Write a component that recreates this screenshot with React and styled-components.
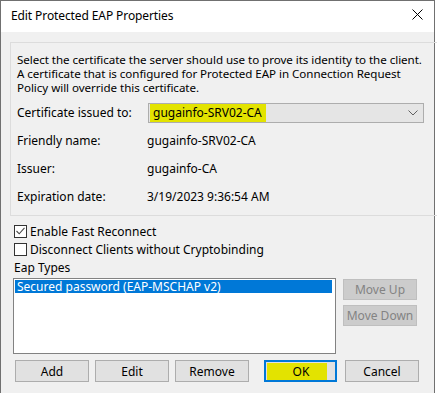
import React from 'react';
import styled, { createGlobalStyle } from 'styled-components';

const GlobalStyle = createGlobalStyle`
  html, body {
    margin: 0;
    padding: 0;
    background: #ffffff;
  }
  body {
    font-family: "Noto Sans", "Open Sans", sans-serif;
    font-size: 12px;
    color: #000;
  }
`;

const Page = styled.div`
  width: 437px;
  height: 393px;
  overflow: hidden;
  background: #ffffff;
`;

const Window = styled.div`
  width: 433px;
  height: 392px;
  border: 1px solid #707070;
  border-bottom: none;
  display: flex;
  flex-direction: column;
  background: #f0f0f0;
`;

const TitleBar = styled.div`
  height: 31px;
  background: #ffffff;
  display: flex;
  align-items: center;
  justify-content: space-between;
  padding: 0 11px 0 10px;
  flex-shrink: 0;
`;

const Title = styled.span`
  font-size: 12px;
  letter-spacing: -0.1px;
  margin-top: -2px;
`;

const CloseIcon = styled.svg`
  width: 11px;
  height: 11px;
  margin-top: -4px;
`;

const Body = styled.div`
  flex: 1;
  display: flex;
  flex-direction: column;
  padding: 10px 0 0 0;
`;

const GroupBox = styled.div`
  margin-left: 9px;
  width: 415px;
  border: 1px solid #dcdcdc;
  padding: 10px 7px 8px 6px;
`;

const Intro = styled.div`
  margin: 0 0 8px;
  display: flex;
  flex-direction: column;
`;

const IntroLine = styled.span`
  display: block;
  height: 14px;
  line-height: 14px;
  font-size: 11.6px;
  letter-spacing: -0.05px;
  white-space: nowrap;
`;

const FieldGrid = styled.div`
  display: grid;
  grid-template-columns: 131px 1fr;
  grid-auto-rows: 20px;
  row-gap: 8px;
  align-items: center;
`;

const FieldLabel = styled.span`
  line-height: 20px;
`;

const FieldValue = styled.span`
  line-height: 20px;
  margin-left: -1px;
`;

const Combo = styled.div`
  height: 18px;
  width: 268px;
  border: 1px solid #adadad;
  background: #e5e5e5;
  display: flex;
  align-items: center;
  justify-content: space-between;
  padding: 0 5px 0 1px;
  box-sizing: content-box;
`;

const Highlight = styled.span`
  background: #e3e300;
  padding: 0 4px 0 3px;
  line-height: 18px;
`;

const Chevron = styled.svg`
  width: 10px;
  height: 6px;
`;

const Checks = styled.div`
  display: flex;
  flex-direction: column;
  margin: 6px 0 0 13px;
`;

const CheckRow = styled.label`
  display: flex;
  align-items: center;
  height: 18px;
  gap: 3px;
`;

const Box = styled.span`
  width: 11px;
  height: 11px;
  border: 1px solid #333333;
  background: #ffffff;
  display: flex;
  align-items: center;
  justify-content: center;
`;

const SectionLabel = styled.div`
  margin: 1px 0 0 13px;
  line-height: 17px;
`;

const ListArea = styled.div`
  display: flex;
  margin: 3px 0 0 12px;
  gap: 7px;
`;

const ListBox = styled.div`
  width: 319px;
  height: 72px;
  border: 1px solid #828282;
  background: #ffffff;
  padding: 1px;
  box-sizing: content-box;
  margin: -1px 0 0 0;
`;

const ListItem = styled.div`
  height: 13px;
  line-height: 13px;
  padding-left: 2px;
  background: ${p => (p.$selected ? '#0078d7' : 'transparent')};
  color: ${p => (p.$selected ? '#ffffff' : '#000000')};
  width: 315px;
`;

const SideButtons = styled.div`
  display: flex;
  flex-direction: column;
  gap: 5px;
`;

const Button = styled.button`
  font-family: inherit;
  font-size: 12px;
  width: ${p => p.$w || 74}px;
  height: ${p => p.$h || 22}px;
  padding: 0;
  margin: 0;
  box-sizing: border-box;
  border: ${p => (p.$default ? '2px solid #0078d7' : '1px solid #adadad')};
  background: ${p => (p.$disabled ? '#cccccc' : '#e1e1e1')};
  border-color: ${p => (p.$disabled ? '#bfbfbf' : p.$default ? '#0078d7' : '#adadad')};
  color: ${p => (p.$disabled ? '#838383' : '#000000')};
  display: flex;
  align-items: center;
  justify-content: center;
`;

const OkFill = styled.span`
  background: #e3e300;
  width: 60px;
  height: 17px;
  margin-right: 7px;
  display: flex;
  align-items: center;
  justify-content: center;
  padding-left: 8px;
  box-sizing: border-box;
`;

const ButtonRow = styled.div`
  display: flex;
  margin: 6px 0 0 14px;
`;

const ButtonGroup = styled.div`
  display: flex;
  gap: ${p => p.$gap}px;
  margin-left: ${p => p.$offset || 0}px;
`;

const introLines = [
  'Select the certificate the server should use to prove its identity to the client.',
  'A certificate that is configured for Protected EAP in Connection Request',
  'Policy will override this certificate.',
];

const App = () => {
  return (
    <Page>
      <GlobalStyle />
      <Window>
        <TitleBar>
          <Title>Edit Protected EAP Properties</Title>
          <CloseIcon viewBox="0 0 11 11">
            <path d="M0.5 0.5 L10.5 10.5 M10.5 0.5 L0.5 10.5" stroke="#000" strokeWidth="1" fill="none" />
          </CloseIcon>
        </TitleBar>
        <Body>
          <GroupBox>
            <Intro>
              {introLines.map(line => (
                <IntroLine key={line}>{line}</IntroLine>
              ))}
            </Intro>
            <FieldGrid>
              <FieldLabel>Certificate issued to:</FieldLabel>
              <Combo>
                <Highlight>gugainfo-SRV02-CA</Highlight>
                <Chevron viewBox="0 0 10 6">
                  <path d="M0.5 0.5 L5 5 L9.5 0.5" stroke="#606060" strokeWidth="1" fill="none" />
                </Chevron>
              </Combo>
              <FieldLabel>Friendly name:</FieldLabel>
              <FieldValue>gugainfo-SRV02-CA</FieldValue>
              <FieldLabel>Issuer:</FieldLabel>
              <FieldValue>gugainfo-CA</FieldValue>
              <FieldLabel>Expiration date:</FieldLabel>
              <FieldValue>3/19/2023 9:36:54 AM</FieldValue>
            </FieldGrid>
          </GroupBox>

          <Checks>
            <CheckRow>
              <Box>
                <svg width="9" height="8" viewBox="0 0 9 8">
                  <path d="M0.5 4 L3.2 6.8 L8.5 0.8" stroke="#4a4a4a" strokeWidth="1.1" fill="none" />
                </svg>
              </Box>
              Enable Fast Reconnect
            </CheckRow>
            <CheckRow>
              <Box />
              Disconnect Clients without Cryptobinding
            </CheckRow>
          </Checks>

          <SectionLabel>Eap Types</SectionLabel>

          <ListArea>
            <ListBox>
              <ListItem $selected>Secured password (EAP-MSCHAP v2)</ListItem>
            </ListBox>
            <SideButtons>
              <Button $disabled $h={21}>Move Up</Button>
              <Button $disabled $h={21}>Move Down</Button>
            </SideButtons>
          </ListArea>

          <ButtonRow>
            <ButtonGroup $gap={6}>
              <Button>Add</Button>
              <Button>Edit</Button>
              <Button>Remove</Button>
            </ButtonGroup>
            <ButtonGroup $gap={8} $offset={15}>
              <Button $default $w={73}>
                <OkFill>OK</OkFill>
              </Button>
              <Button>Cancel</Button>
            </ButtonGroup>
          </ButtonRow>
        </Body>
      </Window>
    </Page>
  );
};

export default App;
